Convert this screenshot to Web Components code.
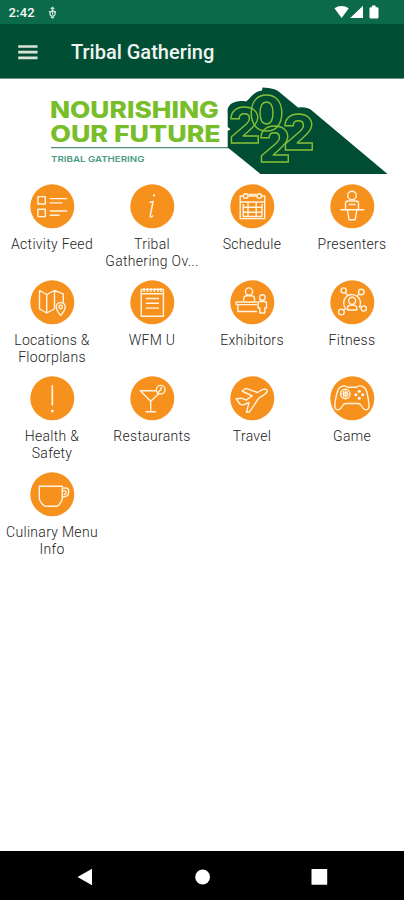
<!DOCTYPE html>
<html lang="en">
<head>
<meta charset="utf-8">
<title>Tribal Gathering</title>
<style>
html,body{margin:0;height:100%;background:#fff}
body{font-family:Roboto,"Liberation Sans",sans-serif}
</style>
</head>
<body>
<gathering-app></gathering-app>
<script>
const define = (name, html) => customElements.define(name, class extends HTMLElement {
  constructor() {
    super();
    const t = document.createElement('template');
    t.innerHTML = html;
    this.attachShadow({ mode: 'open' }).append(t.content.cloneNode(true));
  }
});

define('status-bar', `
<style>
:host{display:flex;align-items:center;height:24px;background:#0b6a4a;color:#f4f8f5;font-size:13px;font-weight:500;padding:2px 0 0 8.5px;box-sizing:border-box}
span{letter-spacing:.2px;margin-top:-1px}
.pin{margin:-1px 0 0 13px}
.sys{margin:-2px 25px 0 auto}
svg{display:block}
</style>
<span>2:42</span>
<svg class="pin" width="9" height="13" viewBox="0 0 9 13" fill="none" stroke="#c9e0d5" stroke-width="1.3"><circle cx="4.500" cy="7.600" r="2.600"/><path d="M4.500 1v7.500M2.800 3l1.700-1.700L6.200 3M1 5.300l1.300 1M8 5.300l-1.300 1M3 11l1.500 1 1.500-1"/></svg>
<svg class="sys" width="45" height="14" viewBox="0 0 45 14" fill="#fff"><path d="M.4 3.3Q7.5-1.5 14.8 3.3L7.6 13z"/><path d="M29 .8V13H16.2z"/><path d="M38 .6h3.600v1.600h1.800q1.100 0 1.100 1v9q0 1.400-1.400 1.400h-6.200q-1.400 0-1.400-1.400v-9q0-1 1.100-1H38z"/></svg>`);

define('app-bar', `
<style>
:host{display:flex;align-items:center;height:55px;box-sizing:border-box;background:#004f35;border-bottom:1px solid #6d9585;padding:2px 0 0 18px;color:#f1f5f1}
svg{display:block;flex:none;margin-top:-1px}
h1{margin:0 0 0 33px;font-size:20px;font-weight:500;line-height:24px;white-space:nowrap}
</style>
<svg width="20" height="16" viewBox="0 0 20 16" stroke="#dbe3d6" stroke-width="2.7"><path d="M.2 2.5h19.3M.2 8.2h19.3M.2 13.8h19.3"/></svg>
<h1><slot></slot></h1>`);

define('event-banner', `
<style>
:host{display:block;height:96px}
svg{display:block}
text{font-family:Inter,"Liberation Sans",sans-serif}
</style>
<svg width="404" height="96" viewBox="0 79 404 96">
<path d="M51 147.600H232" stroke="#4f8b76" stroke-width="1.3"/>
<path d="M227.700 113C226 104 236 99.500 246 101.500C250 99.500 252 92 262 90.500L262.500 87.500C271 88 277 89 281 93.500L298 107.500Q308 106.500 313 111.500L387.500 174H260.500L227.700 147.500V131L230.500 129.300L227.700 127Z" fill="#004d34"/>
<g fill="#78be2a" font-weight="800" font-size="22.600">
<text x="49.900" y="117.600" textLength="169" lengthAdjust="spacingAndGlyphs">NOURISHING</text>
<text x="50.200" y="141.700" textLength="170.500" lengthAdjust="spacingAndGlyphs">OUR FUTURE</text>
</g>
<text x="51" y="162" textLength="93.500" lengthAdjust="spacingAndGlyphs" font-size="8.200" font-weight="600" fill="#4b9c83">TRIBAL GATHERING</text>
<text x="228.800 249.300 258.800 282.800" y="143 131 162 150.400" font-size="50" font-weight="800" fill="none" stroke="#85bf36" stroke-width="1.400">2022</text>
</svg>`);

const icons = {
  feed: '<path d="M7.900 12.600h7.400v7.400H7.900zM7.900 25.200h7.400v7.400H7.900zM19.700 14.600h17.600M19.700 18.900h12.600M19.700 27h17.600M19.700 31.300h9.800"/>',
  info: '<path d="M19.500 18.500q2.500-.500 3.600-1.200l-2.800 14q-.400 3 2.800.200" stroke-width="1.500"/><circle cx="24" cy="11.300" r="1.100" fill="#fff" stroke="none"/>',
  calendar: '<path d="M10.200 12h24.500v22.600H10.200zM10.200 18h24.500M13 23.300h19M13 28.300h19M18 18.500v14M26.200 18.500v14M13.200 20v12.500h18.800V20" /><g fill="#f7911e"><circle cx="15.700" cy="12" r="2.300"/><circle cx="29.200" cy="12" r="2.300"/></g><path d="M18.500 10.500h8"/>',
  presenter: '<circle cx="22" cy="11.500" r="4.300"/><path d="M15.500 25v-5.500q0-2.500 2.500-2.500h8q2.500 0 2.500 2.500V25M18.700 20.500h6.800M10.300 25.800h24M17.500 26l1.600 9.800h6L26.900 26"/>',
  map: '<path d="M33.300 22.500V13.800L24.500 10.500 16.700 14.500 9.500 10.500V29l7.200 4 7.800-4M16.700 14.500V33M24.500 10.500V29"/><path d="M30.700 35.500q-4.500-5.500-4.500-8.500a4.500 4.500 0 0 1 9 0q0 3-4.500 8.500z"/><circle cx="30.700" cy="27" r="1.700"/>',
  notes: '<path d="M11.200 9.500h22.200v26.700H11.200zM11.200 13.800h22.200M14 8v4M17.500 8v4M21 8v4M24.500 8v4M28 8v4M31 8v4M15.800 18.500H29M15.800 23.300H29M15.800 28.100H29"/>',
  exhibit: '<circle cx="19" cy="11.500" r="3.600"/><path d="M13.700 20.800v-2q0-3 3.300-3h4q3.500 0 3.500 3v2M27 22H6.200v2.600H27M7.900 24.800v6.700H27"/><circle cx="32.400" cy="17.500" r="2.800"/><path d="M30 21.500h5q1.500 0 1.500 1.500v5h-1.700v5h-5v-5H28v-5q0-1.500 2-1.500z"/>',
  network: '<circle cx="13.700" cy="10.500" r="2.600"/><circle cx="31.300" cy="12" r="2.800"/><circle cx="11.400" cy="32" r="2.900"/><circle cx="33.800" cy="28.500" r="2.600"/><circle cx="22.100" cy="20.700" r="3.500"/><path d="M17.500 30v-2q0-3 4.600-3t4.700 3v2zM15 27.500a8.700 8.700 0 0 1 1.500-11 8.700 8.700 0 0 1 11.500.5 8.700 8.700 0 0 1 1 10.500M15.500 12.700l2.300 3M29.200 14l-2.200 2.300M13.600 30.200l2.700-2.500M31.300 27.600l-2.500-1"/>',
  alert: '<path d="M22.300 9.300v20.200" stroke-width="1.700"/><path d="M20.600 34h3.400l-1.700 3.200z" fill="#fff" stroke="none"/>',
  drink: '<path d="M26.500 14.800H10.300l10.400 10.500L29 17.500M20.700 25.300v10.200M15.500 35.800h10.400"/><circle cx="30.700" cy="13.700" r="4.300"/><path d="M27 17.500l4-4v-2.500"/>',
  plane: '<path d="M6 22.700l6-.500 4 2 6.200-4.200L12 15l4-2.700L27.500 16.500l5-2.800q4.500-1.300 4.800 1.200-.300 2.200-5 5L28.500 22.500 19.500 35.800l-3 .5 2.500-9.800-5.800 2.300q-3.500.5-4.500-2.500z"/>',
  game: '<path d="M11.500 10.500q4-1.500 6 .8h9q2-2.300 6-.8 3.300 1 4.800 7.500t1.800 12.500q-.5 4-4 3.200-2-.8-4-4.200-1-2-3-2H15.800q-2 0-3 2-2 3.500-4 4.200-3.500.8-4-3.200.2-6 1.900-12.500t4.800-7.500z"/><circle cx="15.300" cy="18" r="4.700"/><path d="M15.300 13.800v8.400M11.200 18h8.400M13.500 15v6M17 15v6M13.200 16.300h4.300M13.200 19.800h4.300" stroke-width="1"/><g fill="#fff" stroke="none"><circle cx="29.300" cy="15.200" r="1.500"/><circle cx="29.300" cy="22.200" r="1.500"/><circle cx="25.900" cy="18.700" r="1.500"/><circle cx="32.700" cy="18.700" r="1.500"/></g>',
  coffee: '<path d="M9.300 14.200h23v11.600q0 4.500-5 8.500H15q-5.700-4-5.700-8.500zM32.300 16h3.200q3.200 0 3.200 3.300v1.300q0 4-6.400 4.700M32.500 19.500l1.800-1 1.700 1v1.500l-2 2"/>'
};

customElements.define('menu-tile', class extends HTMLElement {
  connectedCallback() {
    const root = this.attachShadow({ mode: 'open' });
    root.innerHTML = `
<style>
:host{display:flex;flex-direction:column;align-items:center;height:96px;color:#222;font-size:14px;font-weight:300;line-height:17px;text-align:center;letter-spacing:.3px;white-space:nowrap}
svg{display:block;flex:none;margin-bottom:7px}
</style>
<svg width="45" height="45" viewBox="0 0 45 45" fill="none" stroke="#fff4e2" stroke-width="1.400" stroke-linejoin="round"><circle cx="22.300" cy="22.300" r="22" fill="#f7911e" stroke="none"/>${icons[this.getAttribute('icon')]}</svg>
<div><slot></slot></div>`;
  }
});

define('menu-grid', `
<style>
:host{display:grid;grid-template-columns:repeat(4,100px);padding:9px 2px 0;flex:1;align-content:start}
</style><slot></slot>`);

define('nav-bar', `
<style>
:host{display:grid;height:49px;background:#000}
svg{display:block}
</style>
<svg width="404" height="49" viewBox="0 851 404 49" fill="#fff"><path d="M77.500 877L92 868.800V885.200z"/><circle cx="202.600" cy="877" r="7.400"/><rect x="311.500" y="869" width="15.700" height="15.800" rx=".6"/></svg>`);

define('gathering-app', `
<style>
:host{display:flex;flex-direction:column;width:404px;height:900px;background:#fff;overflow:hidden}
</style>
<status-bar></status-bar>
<app-bar>Tribal Gathering</app-bar>
<event-banner></event-banner>
<menu-grid>
<menu-tile icon="feed">Activity Feed</menu-tile>
<menu-tile icon="info">Tribal<br>Gathering Ov...</menu-tile>
<menu-tile icon="calendar">Schedule</menu-tile>
<menu-tile icon="presenter">Presenters</menu-tile>
<menu-tile icon="map">Locations &amp;<br>Floorplans</menu-tile>
<menu-tile icon="notes">WFM U</menu-tile>
<menu-tile icon="exhibit">Exhibitors</menu-tile>
<menu-tile icon="network">Fitness</menu-tile>
<menu-tile icon="alert">Health &amp;<br>Safety</menu-tile>
<menu-tile icon="drink">Restaurants</menu-tile>
<menu-tile icon="plane">Travel</menu-tile>
<menu-tile icon="game">Game</menu-tile>
<menu-tile icon="coffee">Culinary Menu<br>Info</menu-tile>
</menu-grid>
<nav-bar></nav-bar>`);
</script>
</body>
</html>
